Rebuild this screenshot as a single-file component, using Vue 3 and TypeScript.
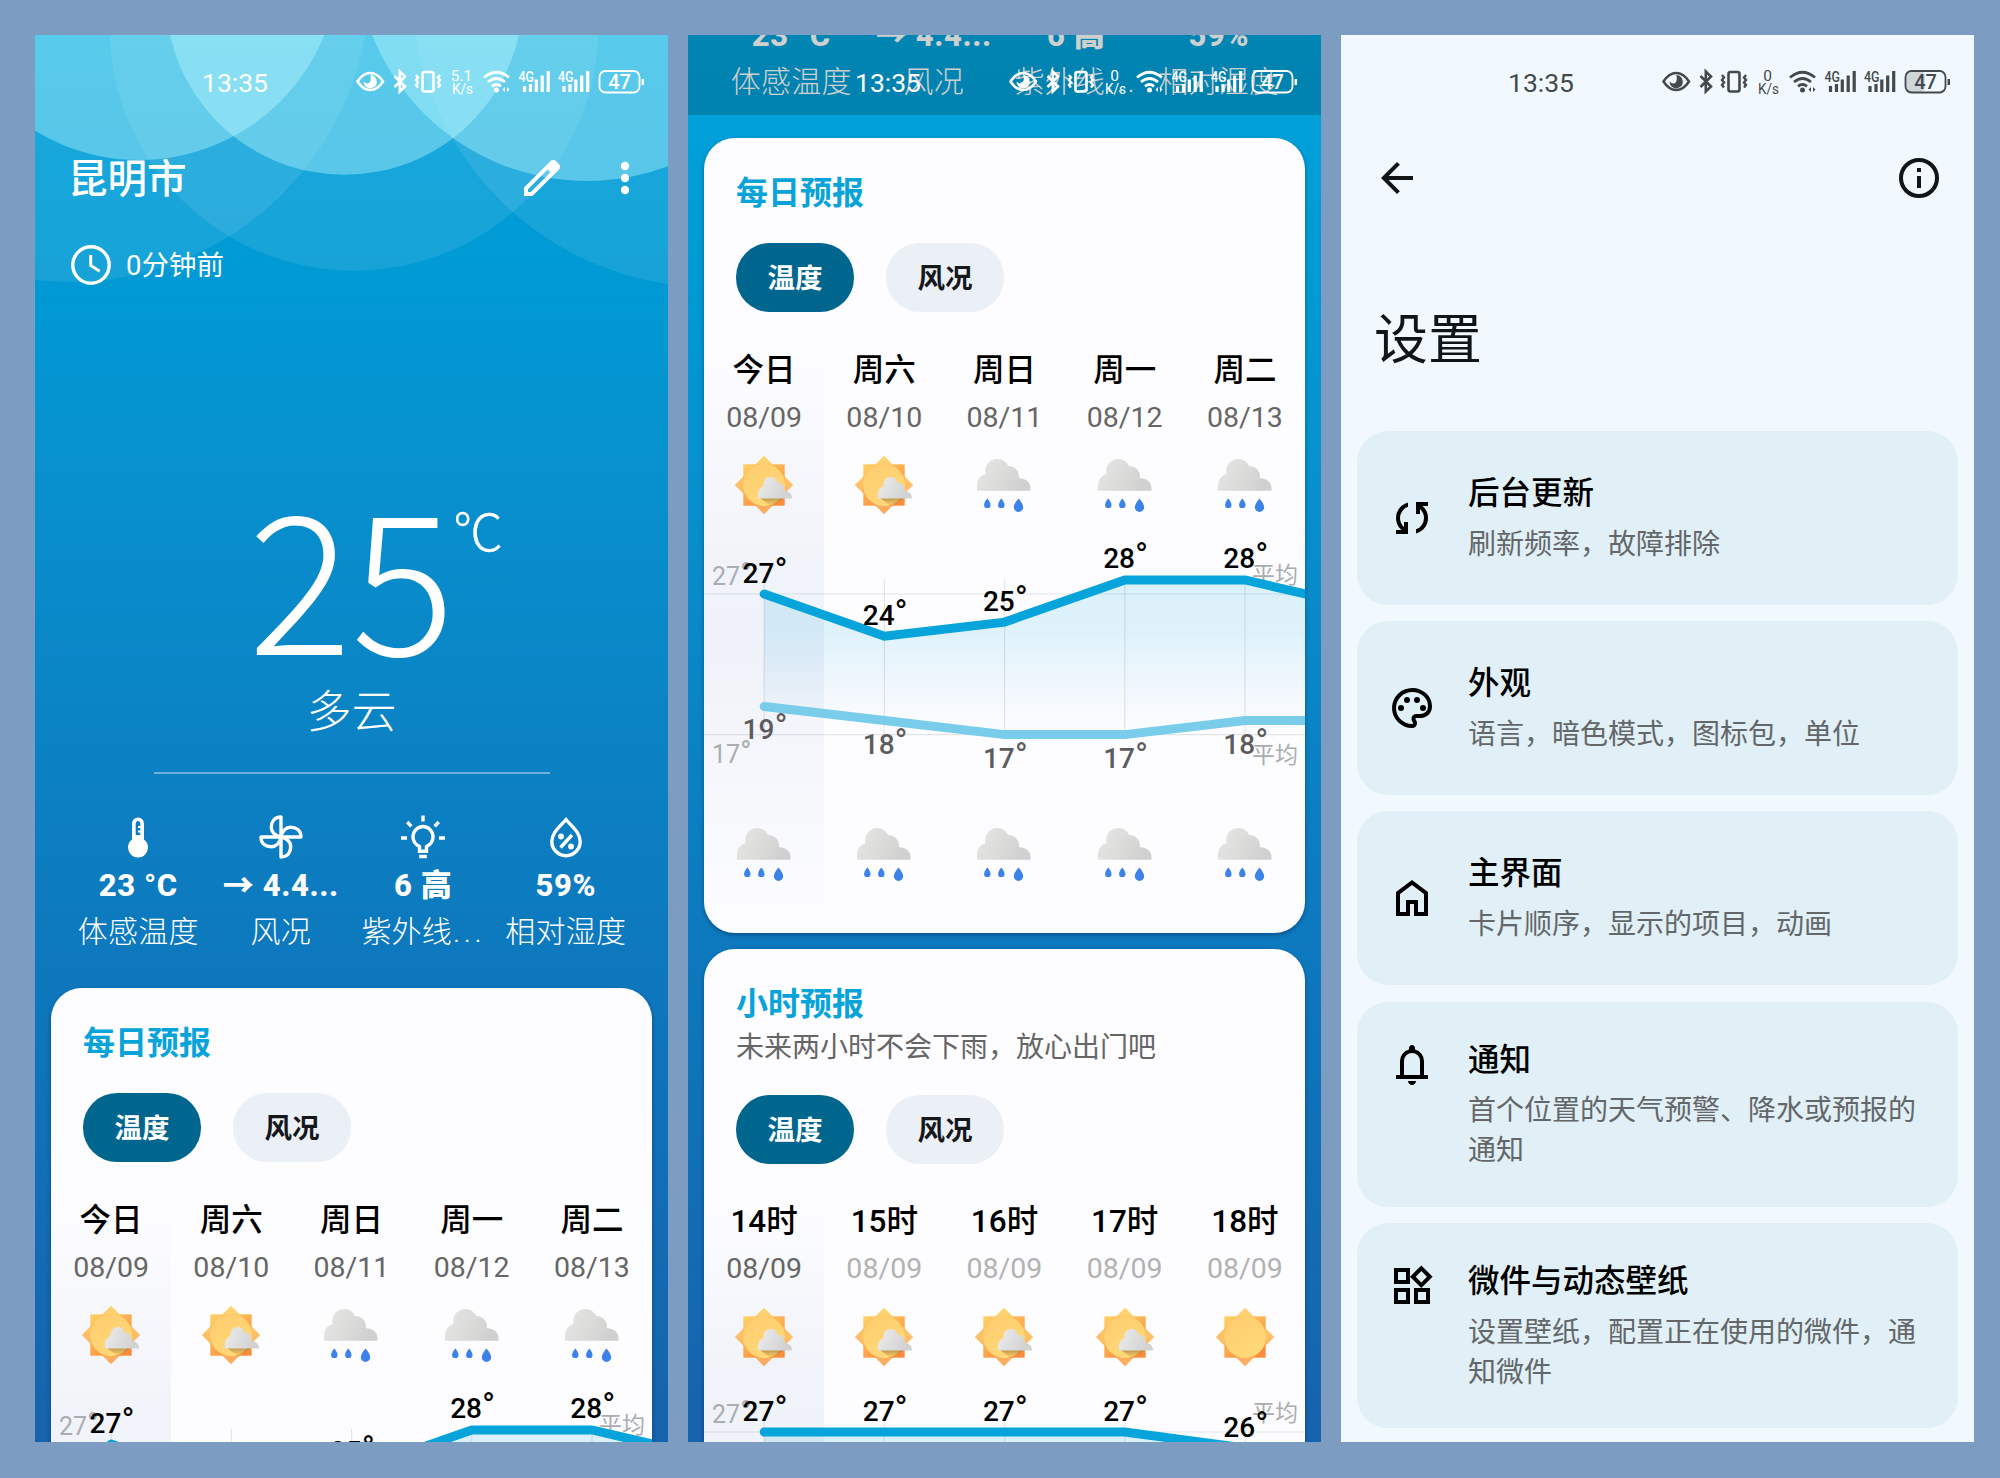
<script setup lang="ts">
type Sky = 'partly' | 'sunny' | 'rain'
interface Slot { label: string; date: string; day: Sky; night?: Sky; high: number; low?: number; dim?: boolean }
interface Card {
  id: string; title: string; subtitle?: string; slots: Slot[]
  nextHigh: number; nextLow?: number
  chartHeight: number; baseY: number; degree: number
}
interface Screen { id: string; kind: 'weather' | 'settings'; scrolled: boolean; speed: string; cards: Card[] }

const daily: Card = {
  id: 'daily', title: '每日预报',
  slots: [
    { label: '今日', date: '08/09', day: 'partly', night: 'rain', high: 27, low: 19 },
    { label: '周六', date: '08/10', day: 'partly', night: 'rain', high: 24, low: 18 },
    { label: '周日', date: '08/11', day: 'rain', night: 'rain', high: 25, low: 17 },
    { label: '周一', date: '08/12', day: 'rain', night: 'rain', high: 28, low: 17 },
    { label: '周二', date: '08/13', day: 'rain', night: 'rain', high: 28, low: 18 },
  ],
  nextHigh: 26, nextLow: 18, chartHeight: 288, baseY: 69, degree: 14.06,
}

const hourly: Card = {
  id: 'hourly', title: '小时预报', subtitle: '未来两小时不会下雨，放心出门吧',
  slots: [
    { label: '14时', date: '08/09', day: 'partly', high: 27 },
    { label: '15时', date: '08/09', day: 'partly', high: 27, dim: true },
    { label: '16时', date: '08/09', day: 'partly', high: 27, dim: true },
    { label: '17时', date: '08/09', day: 'partly', high: 27, dim: true },
    { label: '18时', date: '08/09', day: 'sunny', high: 26, dim: true },
  ],
  nextHigh: 25, chartHeight: 240, baseY: 55, degree: 16,
}

const screens: Screen[] = [
  { id: 'home', kind: 'weather', scrolled: false, speed: '5.1', cards: [daily] },
  { id: 'forecast', kind: 'weather', scrolled: true, speed: '0', cards: [daily, hourly] },
  { id: 'settings', kind: 'settings', scrolled: false, speed: '0', cards: [] },
]

const metrics = [
  { icon: 'thermo', value: '23 °C', label: '体感温度', more: '' },
  { icon: 'wind', value: '→ 4.4...', label: '风况', more: '' },
  { icon: 'uv', value: '6 高', label: '紫外线', more: '...' },
  { icon: 'humidity', value: '59%', label: '相对湿度', more: '' },
]

const settings = [
  { title: '后台更新', text: '刷新频率，故障排除', path: 'M4 20v-2h2.75l-.4-.35q-1.225-1.225-1.787-2.662T4 12.05q0-2.775 1.663-4.937T10 4.25v2.1Q8.2 7 7.1 8.563T6 12.05q0 1.125.425 2.188T7.75 16.2l.25.25V14h2v6zm10-.25v-2.1q1.8-.65 2.9-2.212T18 11.95q0-1.125-.425-2.187T16.25 7.8L16 7.55V10h-2V4h6v2h-2.75l.4.35q1.225 1.225 1.788 2.663T20 11.95q0 2.775-1.662 4.938T14 19.75' },
  { title: '外观', text: '语言，暗色模式，图标包，单位', path: 'M12 22q-2.05 0-3.875-.788t-3.187-2.15-2.15-3.187T2 12q0-2.075.813-3.9t2.2-3.175T8.25 2.788 12.2 2q2 0 3.775.688t3.113 1.9 2.125 2.875T22 11.05q0 2.875-1.75 4.413T16 17h-1.85q-.225 0-.312.125t-.088.275q0 .3.375.863t.375 1.287q0 1.25-.687 1.85T12 22M12 20q.225 0 .363-.125t.137-.325q0-.35-.375-.825T11.750 17.300q0-1.050.725-1.675T14.250 15H16q1.650 0 2.825-.963T20 11.050q0-3.025-2.312-5.038T12.200 4Q8.800 4 6.400 6.325T4 12q0 3.325 2.338 5.663T12 20zM6.500 13.500a1.500 1.500 0 1 0 0-3 1.500 1.500 0 0 0 0 3zM9.500 9.500a1.500 1.500 0 1 0 0-3 1.500 1.500 0 0 0 0 3zM14.500 9.500a1.500 1.500 0 1 0 0-3 1.500 1.500 0 0 0 0 3zM17.500 13.500a1.500 1.500 0 1 0 0-3 1.500 1.500 0 0 0 0 3z' },
  { title: '主界面', text: '卡片顺序，显示的项目，动画', path: 'M6 19h3v-6h6v6h3v-9l-6-4.500L6 10zM4 21V9l8-6 8 6v12h-7v-6h-2v6z' },
  { title: '通知', text: '首个位置的天气预警、降水或预报的通知', path: 'M4 19v-2h2v-7q0-2.075 1.250-3.687T10.500 4.200v-.7q0-.625.438-1.062T12 2t1.063.438T13.500 3.500v.7q2 .5 3.250 2.113T18 10v7h2v2zm8 3q-.825 0-1.412-.587T10 20h4q0 .825-.587 1.413T12 22m-4-5h8v-7q0-1.650-1.175-2.825T12 6T9.175 7.175T8 10z' },
  { title: '微件与动态壁纸', text: '设置壁纸，配置正在使用的微件，通知微件', path: 'M16.650 13 11 7.350l5.650-5.650 5.650 5.650zM3 11V3h8v8zm10 10v-8h8v8zM3 21v-8h8v8zM5 9h4V5H5zm11.675 1.200L19.500 7.375 16.675 4.550 13.850 7.375zM15 19h4v-4h-4zM5 19h4v-4H5z' },
]

const colX = (i: number) => 60.2 + i * 120.2
const tempY = (c: Card, t: number) => c.baseY + (27 - t) * c.degree

function points(c: Card, key: 'high' | 'low'): string[] {
  const next = key === 'high' ? c.nextHigh : c.nextLow
  const values = [...c.slots.map((s) => s[key]), next].filter((v): v is number => v !== undefined)
  return values.map((v, i) => `${colX(i).toFixed(1)},${tempY(c, v).toFixed(1)}`)
}

function area(c: Card): string {
  const low = c.nextLow === undefined ? [`${colX(5)},300`, `${colX(0)},300`] : points(c, 'low').reverse()
  return [...points(c, 'high'), ...low].join(' ')
}
</script>

<template>
  <main class="board">
    <svg class="defs" width="0" height="0" aria-hidden="true">
      <defs>
        <linearGradient id="star" x1="0" y1="0" x2=".7" y2="1">
          <stop offset="0" stop-color="#ffd166" /><stop offset="1" stop-color="#fa8c3c" />
        </linearGradient>
        <linearGradient id="starDiamond" x1="0" y1="0" x2="0" y2="1">
          <stop offset="0" stop-color="#ffcf57" /><stop offset="1" stop-color="#fc9a42" />
        </linearGradient>
        <linearGradient id="disc" x1="0" y1="0" x2=".6" y2="1">
          <stop offset="0" stop-color="#fdcb6e" /><stop offset="1" stop-color="#ffd978" />
        </linearGradient>
        <linearGradient id="cloud" x1="0" y1="0" x2="1" y2=".3">
          <stop offset="0" stop-color="#e6e6e4" /><stop offset=".5" stop-color="#dddddb" /><stop offset="1" stop-color="#d0d0d0" />
        </linearGradient>
        <linearGradient id="cloudLight" x1="0" y1="0" x2="1" y2=".3">
          <stop offset="0" stop-color="#ececec" /><stop offset="1" stop-color="#d2d2d2" />
        </linearGradient>
        <linearGradient id="shade" x1="0" y1="0" x2="0" y2="1">
          <stop offset="0" stop-color="#a8803c" stop-opacity=".75" /><stop offset="1" stop-color="#d8a040" stop-opacity=".1" />
        </linearGradient>
        <linearGradient id="band" x1="0" y1="0" x2="0" y2="1">
          <stop offset="0" stop-color="#00a2da" stop-opacity=".14" /><stop offset=".35" stop-color="#00a2da" stop-opacity=".12" />
          <stop offset=".75" stop-color="#3ba0e0" stop-opacity=".05" /><stop offset="1" stop-color="#3ba0e0" stop-opacity="0" />
        </linearGradient>
        <g id="sky-sunny">
          <rect x="9.300" y="9.300" width="41.400" height="41.400" fill="url(#star)" />
          <path d="M30 .8 59.200 30 30 59.200.8 30z" fill="url(#starDiamond)" opacity=".85" />
          <circle cx="30" cy="30" r="21" fill="url(#disc)" />
        </g>
        <g id="sky-partly">
          <use href="#sky-sunny" />
          <path d="M26 43h24L38 52z" fill="url(#shade)" />
          <path d="M24 43.500C23 36 26 32 29.500 31.300C29 26 32 22 36.500 22C40.500 22 43 24.500 43.600 27.500C48 27.500 51 31 51 36C55 36.500 58 38.500 58 43.500z" fill="url(#cloudLight)" />
        </g>
        <g id="sky-rain">
          <path d="M3 35.700V31C3 24 7 20 11.500 19.200C10 11 15 4 23.500 4C28.500 4 32.500 7 34 11C41 11 45.500 16 45 23.200C52 23.200 56.500 27.500 56.500 33V35.700z" fill="url(#cloud)" />
          <path d="M13.300 43.500q3.200 3.800 3.200 6.400a3.200 3.200 0 0 1-6.400 0q0-2.600 3.200-6.400zM27.300 43.500q3.200 3.800 3.200 6.400a3.200 3.200 0 0 1-6.400 0q0-2.600 3.200-6.400zM44.500 43.500q4.700 5.500 4.700 8.700a4.700 4.700 0 0 1-9.400 0q0-3.200 4.700-8.700z" fill="#3d82e8" />
        </g>
      </defs>
    </svg>

    <section v-for="s in screens" :key="s.id" class="screen" :class="s.kind">
      <svg v-if="s.kind === 'weather' && !s.scrolled" class="rings" width="633" height="300" viewBox="35 35 633 300">
        <g fill="#fff" fill-opacity=".09">
          <circle cx="70" cy="-18" r="300" /><circle cx="354" cy="26" r="244.700" /><circle cx="710.700" cy="-11.600" r="298.700" />
        </g>
        <g fill="#c3fcff" fill-opacity=".38">
          <circle cx="139" cy="-40" r="200" /><circle cx="344.500" cy="-4" r="178.800" /><circle cx="587" cy="-50" r="231" />
        </g>
      </svg>

      <div v-if="s.kind === 'weather'" class="content" :class="{ scrolled: s.scrolled }">
        <header class="place">
          <h1>昆明市</h1>
          <svg class="edit" width="48" height="48" viewBox="0 0 24 24"><path fill="currentColor" d="M5 19h1.425L16.200 9.225 14.775 7.800 5 17.575zm-2 2v-4.250L16.200 3.575q.3-.275.663-.425t.762-.15.775.15.650.45L20.425 5q.3.275.438.650T21 6.400q0 .4-.137.763t-.438.662L7.250 21z" /></svg>
          <svg class="more" width="10" height="34" viewBox="0 0 10 34" fill="currentColor"><circle cx="5" cy="5" r="4.200" /><circle cx="5" cy="17" r="4.200" /><circle cx="5" cy="29" r="4.200" /></svg>
        </header>
        <div class="updated">
          <svg width="40" height="40" viewBox="0 0 40 40" fill="none" stroke="currentColor" stroke-width="3.400"><circle cx="20" cy="20" r="18.200" /><path d="M19.700 10v10.500l9 5.800" stroke-width="3" /></svg>
          <span>0分钟前</span>
        </div>
        <div class="now"><span class="degrees">25</span><span class="unit">°C</span></div>
        <p class="sky">多云</p>
        <hr class="rule" />
        <div class="metrics">
          <div v-for="m in metrics" :key="m.label" class="metric">
            <svg width="48" height="48" viewBox="0 0 48 48" fill="none" stroke="currentColor" stroke-width="3.400">
              <template v-if="m.icon === 'thermo'">
                <path fill="currentColor" stroke="none" fill-rule="evenodd" d="M24 4.500a6 6 0 0 1 6 6V26.500a10 10 0 1 1-12 0V10.500a6 6 0 0 1 6-6zM24 8q-2.300 0-2.300 2.500V22h4.600v-2.500H24v-2h2.300V15H24v-2h2.300v-2.500Q26.300 8 24 8z" />
              </template>
              <g v-else-if="m.icon === 'wind'" stroke-linejoin="round">
                <path v-for="r in [0, 90, 180, 270]" :key="r" :transform="`rotate(${r} 24 24)`" d="M24 24V4C17 4 14.300 9 14.300 14.500C14.300 19 18 23 24 24z" />
              </g>
              <template v-else-if="m.icon === 'uv'">
                <path d="M20.500 38v-4.500C16.500 31.500 14 28 14 24a10 10.500 0 0 1 20 0c0 4-2.500 7.500-6.500 9.500V38M18.800 38.200h10.400M20.200 43.500h7.600M24 2.500v6M2 25h6M40 25h6M8.300 9l4 4.300M39.700 9l-4 4.300" />
              </template>
              <template v-else>
                <path d="M24 6.500C18 13.500 9.800 19.500 9.800 28.500a14.200 14.200 0 0 0 28.400 0C38.200 19.500 30 13.500 24 6.500zM18.500 34.500l11.500-12.500" />
                <g fill="currentColor" stroke="none"><circle cx="19" cy="23.500" r="2.900" /><circle cx="29" cy="33.500" r="2.900" /></g>
              </template>
            </svg>
            <b>{{ m.value }}</b>
            <span>{{ m.label }}<i v-if="m.more">{{ m.more }}</i></span>
          </div>
        </div>

        <article v-for="c in s.cards" :key="c.id" class="card">
          <h2>{{ c.title }}</h2>
          <p v-if="c.subtitle" class="subtitle">{{ c.subtitle }}</p>
          <div class="chips"><span class="chip on">温度</span><span class="chip">风况</span></div>
          <div class="forecast">
            <div class="columns">
              <div v-for="(t, i) in c.slots" :key="i" class="column">
                <strong>{{ t.label }}</strong>
                <span :class="{ dim: t.dim }">{{ t.date }}</span>
                <svg width="60" height="80" viewBox="0 -10 60 80"><use :href="`#sky-${t.day}`" /></svg>
              </div>
            </div>
            <svg class="chart" width="601" :height="c.chartHeight" :viewBox="`0 0 601 ${c.chartHeight}`">
              <polygon :points="area(c)" fill="url(#band)" />
              <g stroke="#5a7080" stroke-opacity=".17" stroke-width="1.200">
                <path :d="`M0 ${c.baseY}H601`" />
                <path v-if="c.nextLow" :d="`M0 ${tempY(c, 17)}H601`" />
                <path v-for="i in 5" :key="i" :d="`M${colX(i - 1)} ${c.baseY - 15}V${tempY(c, 17)}`" />
              </g>
              <g class="guide">
                <text x="8" :y="c.baseY - 9">27<tspan class="deg">°</tspan></text><text x="594" :y="c.baseY - 11" text-anchor="end" class="avg">平均</text>
                <template v-if="c.nextLow">
                  <text x="8" :y="tempY(c, 17) + 28">17<tspan class="deg">°</tspan></text><text x="594" :y="tempY(c, 17) + 28" text-anchor="end" class="avg">平均</text>
                </template>
              </g>
              <polyline v-if="c.nextLow" :points="points(c, 'low').join(' ')" class="line low" />
              <polyline :points="points(c, 'high').join(' ')" class="line" />
              <g v-for="(t, i) in c.slots" :key="i" class="temp">
                <text :x="colX(i) + .8" :y="tempY(c, t.high) - 11.500">{{ t.high }}<tspan class="deg">°</tspan></text>
                <text v-if="t.low" class="min" :x="colX(i) + .8" :y="tempY(c, t.low) + 33">{{ t.low }}<tspan class="deg">°</tspan></text>
              </g>
            </svg>
            <div v-if="c.nextLow" class="columns nights">
              <div v-for="(t, i) in c.slots" :key="i" class="column">
                <svg width="60" height="80" viewBox="0 -10 60 80"><use :href="`#sky-${t.night}`" /></svg>
              </div>
            </div>
          </div>
        </article>
      </div>

      <div v-else class="settings-page">
        <nav class="toolbar">
          <svg width="48" height="48" viewBox="0 0 24 24"><path fill="currentColor" d="m7.825 13 5.600 5.600L12 20l-8-8 8-8 1.425 1.400-5.600 5.600H20v2z" /></svg>
          <svg width="48" height="48" viewBox="0 0 24 24"><circle cx="12" cy="12" r="9" fill="none" stroke="currentColor" stroke-width="2" /><path fill="currentColor" d="M11 11h2v6h-2zM11 7h2v2h-2z" /></svg>
        </nav>
        <h1 class="page-title">设置</h1>
        <ul class="list">
          <li v-for="item in settings" :key="item.title" :class="{ tall: item.text.length > 16 }">
            <svg width="48" height="48" viewBox="0 0 24 24"><path fill="currentColor" fill-rule="evenodd" :d="item.path" /></svg>
            <div><h3>{{ item.title }}</h3><p>{{ item.text }}</p></div>
          </li>
        </ul>
      </div>

      <div class="status" :class="{ veil: s.scrolled }">
        <time>13:35</time>
        <svg width="292" height="30" viewBox="0 0 292 30" fill="none" stroke="currentColor" stroke-width="2.200">
          <path d="M2.500 13.500Q8 5 15.200 5T28 13.500Q22.500 22 15.200 22T2.500 13.500z" stroke-width="2.500" />
          <path d="M15.500 7a6.700 6.700 0 1 1-7 6.500q3 3 5.500 1.500T15.500 7z" fill="currentColor" stroke="none" />
          <path d="M39.500 8 50 18.500 44.800 23.500V3.500L50 8.500 39.500 19" stroke-width="2.600" />
          <rect x="67.500" y="4" width="11" height="19.500" rx="2" stroke-width="2.600" />
          <path d="M61 7l2 2.500-2 2.500 2 2.500-2 2.500 2 2.500M85 7l-2 2.500 2 2.500-2 2.500 2 2.500-2 2.500" stroke-width="2.400" />
          <g class="net">
            <text x="106.500" y="13">{{ s.speed }}</text><text x="107.500" y="26" textLength="21" lengthAdjust="spacingAndGlyphs">K/s</text>
          </g>
          <path d="M129 9.500q12.500-10.500 25 0M133 14q8.500-7 17 0M137 18.300q4.500-3.600 9 0" stroke-width="2.800" />
          <circle cx="141.500" cy="22" r="2.500" fill="currentColor" stroke="none" />
          <path d="M150 19l-2.500 2.500L150 24zM152 19l2.500 2.500L152 24z" fill="currentColor" stroke="none" />
          <g v-for="x in [0, 39.500]" :key="x" :transform="`translate(${x} 0)`">
            <text class="gen" x="163.500" y="13.500" textLength="15.500" lengthAdjust="spacingAndGlyphs">4G</text>
            <path d="M169.500 18v6M175.500 16v8M181.300 11.500v12.500M187.200 7.500v16.500M193.200 3v21" stroke-width="3.200" />
          </g>
          <rect v-if="s.kind === 'settings'" x="245" y="3" width="19" height="21" rx="5" fill="#cfd6da" stroke="none" />
          <rect x="244.500" y="3" width="40" height="21.500" rx="6" stroke-width="1.800" />
          <path d="M287.800 11v6" stroke-width="2.500" />
          <text class="pct" x="264.500" y="20.800">47</text>
        </svg>
      </div>
    </section>
  </main>
</template>

<style>
body { margin: 0; background: #7d9cc2; }
</style>

<style scoped>
.board {
  box-sizing: border-box; width: 2000px; height: 1478px; padding: 35px 0 0 35px;
  display: flex; gap: 20px; background: #7d9cc2; overflow: hidden;
  font-family: Roboto, "Noto Sans CJK SC", sans-serif;
}
.defs { position: absolute; }
h1, h2, h3, p, ul { margin: 0; padding: 0; font-weight: 400; }
svg { display: block; flex: none; }
.screen { position: relative; width: 633px; height: 1407px; overflow: hidden; flex: none; }
.weather {
  color: #fff;
  background: linear-gradient(#02a4dc 0, #0099d4 18%, #0890ce 32%, #0b80c2 53%, #0f73ba 74%, #1762ad 100%);
}
.rings { position: absolute; left: 0; top: 0; }
.content { position: relative; display: flow-root; }
.scrolled { margin-top: -850px; }

.place { margin: 113px 39px 0 33px; height: 60px; display: flex; align-items: center; }
.place h1 { font-size: 39.500px; line-height: 60px; font-weight: 500; padding-top: 3px; }
.edit { margin-left: auto; }
.more { margin-left: 54px; margin-right: -1px; }
.updated { margin: 37px 0 0 36px; height: 40px; display: flex; align-items: center; gap: 15px; font-size: 27.500px; line-height: 40px; }
.updated span { padding-top: 2px; }
.now { margin-top: 196px; height: 180px; display: grid; grid-template-columns: 1fr auto 1fr; font-family: "Noto Sans CJK SC", sans-serif; font-weight: 300; }
.degrees { grid-column: 2; font-size: 193px; line-height: 180px; font-weight: 200; }
.unit { grid-column: 3; font-size: 51px; line-height: 60px; margin: 18px 0 0 -1px; letter-spacing: -1px; -webkit-text-stroke: .4px #fff; }
.sky { margin-top: 22px; font-size: 45px; line-height: 60px; font-weight: 300; text-align: center; }
.rule { width: 396px; height: 1.500px; margin: 29px auto 0; border: 0; background: rgba(255, 255, 255, .4); }
.metrics { margin: 39.500px 31px 0 32px; display: grid; grid-template-columns: repeat(4, 1fr); }
.metric { display: flex; flex-direction: column; align-items: center; white-space: nowrap; }
.metric b { margin-top: 4.500px; font-size: 31px; line-height: 40px; font-weight: 800; letter-spacing: .6px; }
.metric span { margin-top: 6.500px; margin-bottom: 1px; font-size: 30px; line-height: 40px; font-weight: 300; letter-spacing: .2px; }
.metric i { font-style: normal; letter-spacing: 3.500px; margin-left: 1px; }

.card {
  margin: 35px 16px 0; padding: 34px 0 40px; height: 721px; width: 601px; border-radius: 31px;
  background: #fdfdff; color: #000; overflow: hidden; box-shadow: 0 2px 4px rgba(0, 30, 70, .45);
}
.card + .card { margin-top: 15.500px; }
.card h2 { margin-left: 32px; font-size: 32px; line-height: 40px; font-weight: 700; color: #08a3d9; padding-top: 1px; }
.subtitle { margin-left: 32px; padding-top: 5px; margin-bottom: -2px; font-size: 28px; line-height: 38px; color: #666; }
.chips { margin: 30px 0 34px 32px; display: flex; gap: 32px; }
.chip { box-sizing: border-box; width: 118px; height: 69px; padding-top: 1px; border-radius: 34px; background: #ebeff6; color: #15181b; text-align: center; font-size: 27.500px; line-height: 69px; font-weight: 700; }
.chip.on { background: #01668d; color: #fff; }
.forecast { padding-bottom: 40px; background: linear-gradient(rgba(235, 239, 247, 0), rgba(235, 239, 247, .7) 38%, rgba(235, 239, 247, .75) 52%, rgba(235, 239, 247, 0)) 0 0 / 120px 100% no-repeat; }
.columns { display: grid; grid-template-columns: repeat(5, 1fr); }
.column { display: flex; flex-direction: column; align-items: center; }
.column strong { font-size: 31.500px; line-height: 44px; font-weight: 500; padding-top: 2.500px; }
.column span { font-size: 28.500px; line-height: 50px; padding-bottom: 2px; color: #666; }
.column > svg { margin-top: .5px; }
.column .dim { color: #b2b2b2; }
.line { fill: none; stroke: #06a4da; stroke-width: 9; stroke-linecap: round; }
.line.low { stroke: #79cdeb; }
.temp text { font-size: 28px; font-weight: 500; text-anchor: middle; fill: #000; }
.temp .min { fill: #5c5c5e; }
.temp .deg, .guide .deg { font-size: 1.25em; font-weight: 400; }
.guide text { font-size: 25px; fill: #aaadb0; }
.guide .avg { font-size: 23px; }

.settings { background: #f2f9fe; color: #111517; }
.toolbar { margin: 119px 31px 0 32px; display: flex; justify-content: space-between; }
.page-title { margin: 99px 0 0 33px; font-size: 54px; line-height: 80px; }
.list { margin: 50px 16px 0; list-style: none; display: flex; flex-direction: column; gap: 16.500px; }
.list li { box-sizing: border-box; height: 173.700px; border-radius: 31px; background: #e1eff6; display: flex; align-items: center; padding: 0 38px 0 31px; gap: 32px; color: #000; }
.list li div { padding-top: 2px; }
.list li.tall { height: 205px; align-items: flex-start; }
.tall svg { margin-top: 39px; }
.tall div { margin-top: 36px; }
.list h3 { font-size: 31.500px; line-height: 42px; font-weight: 500; }
.list p { margin-top: 9.500px; width: 450px; font-size: 28px; line-height: 40px; color: #636769; }

.status { position: absolute; left: 0; top: 0; width: 100%; height: 79.500px; display: flex; align-items: flex-start; }
.status.veil { background: rgba(0, 0, 0, .19); }
.status time { margin: 33px 0 0 167px; width: 153px; font-size: 26.500px; line-height: 30px; }
.status svg { margin-top: 33px; }
.status text { fill: currentColor; stroke: none; }
.net text { font-size: 15.500px; text-anchor: middle; }
.gen { font-size: 14.500px; font-weight: 500; }
.pct { font-size: 20px; font-weight: 500; text-anchor: middle; }
.settings .status { color: #43494c; }
</style>
